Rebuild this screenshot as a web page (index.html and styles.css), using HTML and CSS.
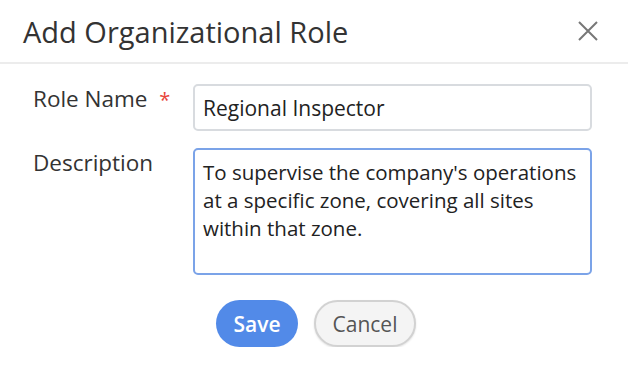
FILE: index.html
```html
<!DOCTYPE html>
<html lang="en">
<head>
    <meta charset="UTF-8">
    <meta name="viewport" content="width=device-width, initial-scale=1.0">
    <title>Add Organizational Role</title>
    <link rel="stylesheet" href="styles.css">
</head>
<body>

<div class="modal">
    <div class="modal-header">
        <h1>Add Organizational Role</h1>
        <button type="button" class="close-button" aria-label="Close">
            <svg width="20" height="20" viewBox="0 0 20 20">
                <path d="M1 1 L19 19 M19 1 L1 19" stroke="#777" stroke-width="2" fill="none"/>
            </svg>
        </button>
    </div>

    <form class="role-form">
        <div class="form-row">
            <label for="roleName">Role Name <span class="required">*</span></label>
            <input type="text" id="roleName" value="Regional Inspector">
        </div>
        <div class="form-row">
            <label for="roleDescription">Description</label>
            <textarea id="roleDescription">To supervise the company's operations at a specific zone, covering all sites within that zone.</textarea>
        </div>
        <div class="form-actions">
            <button type="button" class="save-button">Save</button>
            <button type="button" class="cancel-button">Cancel</button>
        </div>
    </form>
</div>

</body>
</html>
```

FILE: styles.css
```css
body {
    font-family: 'Open Sans', 'Liberation Sans', sans-serif;
    background-color: #fff;
    color: #333;
    margin: 0;
}

.modal-header {
    display: flex;
    align-items: center;
    justify-content: space-between;
    height: 62px;
    padding: 0 30px 0 23px;
    border-bottom: 2px solid #ececec;
}

.modal-header h1 {
    margin: 0;
    font-size: 29px;
    font-weight: 400;
    color: #333;
}

.close-button {
    background: none;
    border: none;
    padding: 0;
    width: 20px;
    height: 20px;
    cursor: pointer;
}

.close-button svg {
    display: block;
}

.role-form {
    padding: 20px 0 0 33px;
}

.form-row {
    display: flex;
    align-items: flex-start;
    margin-bottom: 17px;
}

.form-row label {
    width: 160px;
    font-size: 22.5px;
    color: #333;
    line-height: 30px;
    padding-top: 0;
}

.required {
    color: #e8443a;
    font-size: 20px;
    margin-left: 6px;
}

input[type="text"],
textarea {
    width: 399px;
    box-sizing: border-box;
    font-family: 'Open Sans', 'Liberation Sans', sans-serif;
    font-size: 21px;
    color: #222;
    border: 2px solid #d8dbdf;
    border-radius: 5px;
    padding: 0 8px;
    margin: 0;
}

input[type="text"] {
    height: 47px;
}

textarea {
    height: 127px;
    font-size: 20.5px;
    padding: 8px 2px 8px 8px;
    line-height: 28px;
    border-color: #7ba3e8;
    resize: none;
    outline: none;
    overflow: hidden;
}

.form-actions {
    display: flex;
    justify-content: center;
    gap: 16px;
    padding: 8px 0 0;
    margin-left: -29px;
}

.form-actions button {
    height: 47px;
    border-radius: 24px;
    font-family: 'Open Sans', 'Liberation Sans', sans-serif;
    font-size: 21px;
    cursor: pointer;
}

.save-button {
    width: 82px;
    background-color: #528ae8;
    color: #fff;
    font-weight: 600;
    border: none;
}

.cancel-button {
    width: 102px;
    background-color: #f4f4f4;
    color: #555;
    border: 2px solid #d2d2d2;
    box-shadow: 0 1px 2px rgba(0, 0, 0, 0.12);
}
```
